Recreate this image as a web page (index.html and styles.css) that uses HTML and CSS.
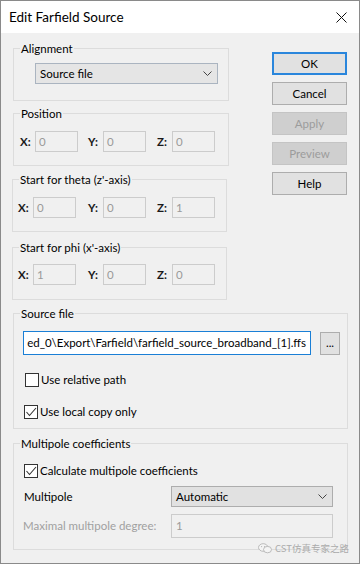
FILE: index.html
```html
<!DOCTYPE html>
<html>
<head>
<meta charset="utf-8">
<link rel="stylesheet" href="styles.css">
</head>
<body>
<div class="window">
  <div class="titlebar">
    <span class="title">Edit Farfield Source</span>
    <svg class="close" width="11" height="11" viewBox="0 0 11 11"><path d="M0.5 0.5 L10.5 10.5 M10.5 0.5 L0.5 10.5" stroke="#111" stroke-width="1" fill="none"/></svg>
  </div>
  <div class="client">
    <div class="top">
      <div class="leftcol">
        <div class="group g-align">
          <div class="gtitle">Alignment</div>
          <div class="select sel-align"><span>Source file</span><svg class="chev" width="9" height="5" viewBox="0 0 9 5"><path d="M0.5 0.5 L4.5 4.5 L8.5 0.5" stroke="#444" stroke-width="1" fill="none"/></svg></div>
        </div>
        <div class="group g-pos">
          <div class="gtitle">Position</div>
          <div class="xyz">
            <div class="cell"><span class="lbl">X:</span><span class="field">0</span></div>
            <div class="cell"><span class="lbl">Y:</span><span class="field">0</span></div>
            <div class="cell"><span class="lbl">Z:</span><span class="field">0</span></div>
          </div>
        </div>
        <div class="group g-theta">
          <div class="gtitle">Start for theta (z'-axis)</div>
          <div class="xyz">
            <div class="cell"><span class="lbl">X:</span><span class="field">0</span></div>
            <div class="cell"><span class="lbl">Y:</span><span class="field">0</span></div>
            <div class="cell"><span class="lbl">Z:</span><span class="field">1</span></div>
          </div>
        </div>
        <div class="group g-phi">
          <div class="gtitle">Start for phi (x'-axis)</div>
          <div class="xyz">
            <div class="cell"><span class="lbl">X:</span><span class="field">1</span></div>
            <div class="cell"><span class="lbl">Y:</span><span class="field">0</span></div>
            <div class="cell"><span class="lbl">Z:</span><span class="field">0</span></div>
          </div>
        </div>
      </div>
      <div class="buttons">
        <div class="btn btn-default">OK</div>
        <div class="btn">Cancel</div>
        <div class="btn btn-disabled">Apply</div>
        <div class="btn btn-disabled">Preview</div>
        <div class="btn">Help</div>
      </div>
    </div>
    <div class="group g-src">
      <div class="gtitle">Source file</div>
      <div class="path-row">
        <div class="path"><span>ed_0\Export\Farfield\farfield_source_broadband_[1].ffs</span></div>
        <div class="browse">...</div>
      </div>
      <div class="check check-rel"><span class="cb"></span><span>Use relative path</span></div>
      <div class="check check-local"><span class="cb"><svg width="12" height="12" viewBox="0 0 12 12"><path d="M1.5 6 L4.5 9.5 L11 2" stroke="#333" stroke-width="1.1" fill="none"/></svg></span><span>Use local copy only</span></div>
    </div>
    <div class="group g-multi">
      <div class="gtitle">Multipole coefficients</div>
      <div class="check check-calc"><span class="cb"><svg width="12" height="12" viewBox="0 0 12 12"><path d="M1.5 6 L4.5 9.5 L11 2" stroke="#333" stroke-width="1.1" fill="none"/></svg></span><span>Calculate multipole coefficients</span></div>
      <div class="frow frow-mp">
        <span class="flabel">Multipole</span>
        <div class="select sel-mp"><span>Automatic</span><svg class="chev" width="9" height="5" viewBox="0 0 9 5"><path d="M0.5 0.5 L4.5 4.5 L8.5 0.5" stroke="#444" stroke-width="1" fill="none"/></svg></div>
      </div>
      <div class="frow frow-max">
        <span class="flabel flabel-dis">Maximal multipole degree:</span>
        <div class="field field-wide">1</div>
      </div>
    </div>
    <div class="watermark">
      <svg width="14" height="11" viewBox="0 0 14 11"><ellipse cx="5.2" cy="4.5" rx="4.7" ry="3.8" stroke="#b4b4b4" stroke-width="0.9" fill="#f4f4f4"/><ellipse cx="9.5" cy="6.6" rx="4" ry="3.2" stroke="#b4b4b4" stroke-width="0.9" fill="#f4f4f4"/><circle cx="3.6" cy="3.6" r="0.6" fill="#b4b4b4"/><circle cx="6.6" cy="3.6" r="0.6" fill="#b4b4b4"/></svg>
      <span>CST仿真专家之路</span>
    </div>
  </div>
</div>
</body>
</html>
```
FILE: styles.css
```css
* { box-sizing: border-box; }
html, body { margin: 0; padding: 0; background: #ffffff; }
body {
  font-family: Lato, "Open Sans", "Noto Sans CJK SC", sans-serif;
  font-size: 11.5px;
  line-height: 14px;
  color: #000;
}
.window {
  width: 360px;
  height: 564px;
  border: 1px solid #8a8a8a;
  background: #f0f0f0;
  position: relative;
  display: flex;
  flex-direction: column;
}
.titlebar {
  height: 32px;
  background: #ffffff;
  display: flex;
  align-items: center;
  padding-left: 8px;
  flex: none;
}
.title { font-size: 13.5px; color: #000; }
.close { margin-left: auto; margin-right: 12px; margin-top: 1px; }
.client { flex: 1; position: relative; }
.top { display: flex; }
.leftcol { margin-left: 12px; width: 216px; }
.buttons {
  margin-left: 43px;
  margin-top: 19px;
  display: flex;
  flex-direction: column;
  gap: 7px;
}
.btn {
  width: 75px;
  height: 23px;
  background: #e1e1e1;
  border: 1px solid #adadad;
  display: flex;
  align-items: center;
  justify-content: center;
}
.btn-default { border: 2px solid #2a86dc; }
.btn-disabled { background: #cfcfcf; border-color: #c4c4c4; color: #9c9c9c; }

.group { border: 1px solid #dcdcdc; }
.gtitle {
  margin: -8px 0 0 6px;
  padding: 0 1px;
  background: #f0f0f0;
  width: max-content;
  line-height: 16px;
}
.g-align { margin-top: 15px; }
.g-pos { margin-top: 12px; }
.g-theta { margin-top: 13px; margin-left: -1px; width: 215px; }
.g-phi { margin-top: 15px; margin-left: -1px; width: 215px; }

.select {
  height: 21px;
  display: flex;
  align-items: center;
  justify-content: space-between;
  padding: 0 5px 0 4px;
}
.sel-align {
  margin: 6px 0 16px 21px;
  width: 183px;
  background: #e5e5e5;
  border: 1px solid #aab4c0;
}
.sel-mp {
  width: 162px;
  background: #e1e1e1;
  border: 1px solid #adadad;
}
.chev { display: block; }

.xyz {
  display: grid;
  grid-template-columns: 68px 69px 60px;
  margin: 9px 0 13px 6px;
}
.g-theta .xyz, .g-phi .xyz { margin-left: 5px; grid-template-columns: 70px 69px 60px; }
.g-phi .xyz { margin-top: 8px; margin-bottom: 14px; }
.cell { display: flex; align-items: center; }
.lbl { width: 15px; font-weight: 700; color: #1a1a1a; }
.field {
  width: 43px;
  height: 21px;
  border: 1px solid #cccccc;
  background: #f0f0f0;
  color: #9a9a9a;
  padding-left: 3px;
  line-height: 19px;
}

.g-src { margin: 13px 0 0 12px; width: 335px; }
.path-row { display: flex; margin: 9px 0 0 9px; }
.path {
  width: 288px;
  height: 24px;
  background: #ffffff;
  border: 1px solid #1a7fd6;
  display: flex;
  align-items: center;
  justify-content: flex-end;
  overflow: hidden;
  white-space: nowrap;
  padding-right: 4px;
}
.browse {
  width: 20px;
  height: 23px;
  margin: 1px 0 0 9px;
  background: #e1e1e1;
  border: 1px solid #adadad;
  display: flex;
  align-items: center;
  justify-content: center;
  line-height: 1;
  padding-bottom: 2px;
}
.check { display: flex; align-items: center; gap: 2px; line-height: 14px; }
.cb {
  width: 14px;
  height: 14px;
  border: 1px solid #333;
  background: #ffffff;
  display: flex;
  align-items: center;
  justify-content: center;
}
.check-rel { margin: 18px 0 0 11px; }
.check-local { margin: 18px 0 9px 10px; }

.g-multi { margin: 14px 0 0 12px; width: 335px; }
.check-calc { margin: 12px 0 0 10px; }
.frow { display: flex; align-items: center; padding-left: 10px; }
.frow-mp { margin-top: 8px; }
.frow-max { margin: 7px 0 11px 0; padding-left: 9px; }
.flabel { width: 147px; }
.flabel-dis { width: 148px; color: #a0a0a0; }
.field-wide { width: 162px; height: 24px; line-height: 22px; padding-left: 4px; }

.watermark {
  position: absolute;
  right: 10px;
  bottom: 9px;
  display: flex;
  align-items: center;
  gap: 3px;
  color: #ababab;
  font-family: "Noto Sans CJK SC", sans-serif;
  font-size: 9.5px;
  line-height: 12px;
}
.watermark svg { display: block; }
```
